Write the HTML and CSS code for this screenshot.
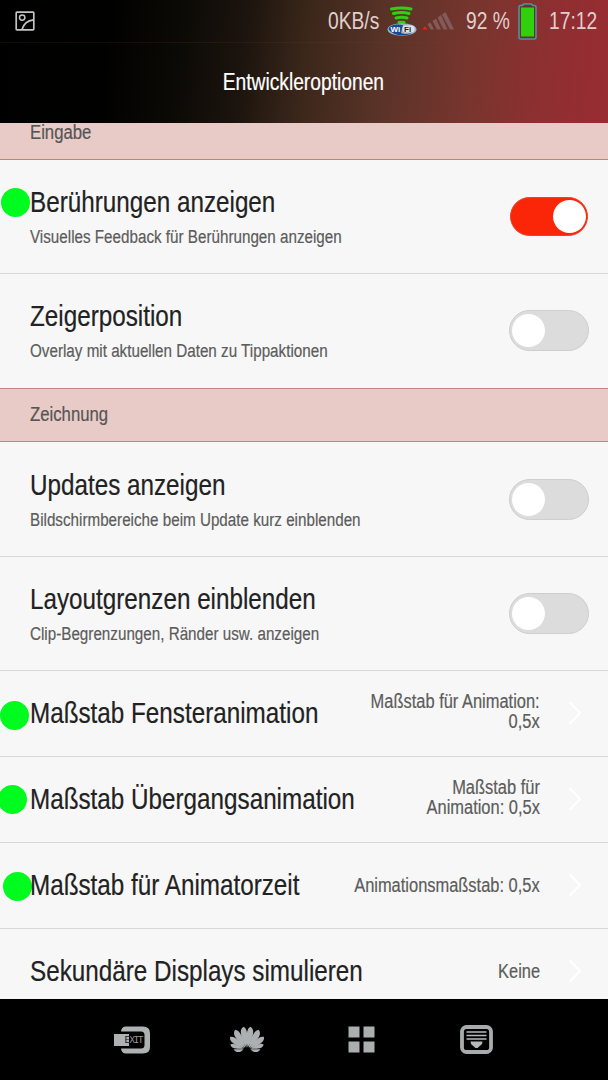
FILE: index.html
```html
<!DOCTYPE html>
<html lang="de">

<head>
    <meta charset="UTF-8">
    <meta name="viewport" content="width=device-width, initial-scale=1.0">
    <title>Entwickleroptionen</title>
    <link rel="stylesheet" href="styles.css">
</head>

<body>
    <div class="header">
        <div class="statusbar">
            <svg class="icon-picture" width="20" height="20" viewBox="0 0 20 20" fill="none" stroke="#c4c4c4" stroke-width="1.7">
                <rect x="1.2" y="1.2" width="17.6" height="17.6" rx="0.8"/>
                <circle cx="7.200" cy="6.600" r="2.700" stroke-width="1.500"/>
                <path d="M7 18.500C8.500 13 12 9.500 18.500 8.800"/>
            </svg>
            <span class="speed">0KB/s</span>
            <svg class="icon-wifi" width="30" height="31" viewBox="0 0 30 31">
                <g fill="none" stroke="#2fd00c" stroke-width="3" stroke-linecap="round">
                    <path d="M4.500 3Q15 0.800 24 3"/>
                    <path d="M6.500 7.500Q15 5.500 22 7.500"/>
                    <path d="M9 12Q15 10.500 20 12"/>
                    <path d="M12 16.200H17"/>
                </g>
                <ellipse cx="15" cy="23.500" rx="14.500" ry="6.200" fill="#9eb3bf"/>
                <path d="M1.500 23C3 18 12 18 16 19L14 27C18 29 25 28 27 25C23 31 6 31 1.500 23Z" fill="#174a93"/>
                <rect x="15.500" y="19.500" width="12" height="7" rx="3" fill="#dfe3e5"/>
                <text class="wifi-text" x="3.500" y="26" fill="#fff">Wi</text>
                <text class="wifi-text" x="17" y="26" fill="#222">Fi</text>
            </svg>
            <svg class="icon-signal" width="32" height="18" viewBox="0 0 32 18">
                <path d="M0 17.500L3 14L5.500 17.500Z" fill="#f31c10"/>
                <g fill="#84595a">
                    <path d="M5.500 12L8.500 10.500L12 17.500H8.500Z"/>
                    <path d="M10.500 9L14 6.500L19 17.500H15Z"/>
                    <path d="M15.500 5.500L19 3L25.500 17.500H21.500Z"/>
                    <path d="M20 2.500L23.500 0L32 17.500H28Z"/>
                </g>
            </svg>
            <span class="percent">92 %</span>
            <svg class="icon-battery" width="19" height="37" viewBox="0 0 19 37">
                <path d="M4 2.500L6 1H13L15 2.500H16.500Q18 2.500 18 4V34.500Q18 36 16.500 36H2.500Q1 36 1 34.500V4Q1 2.500 2.500 2.500Z" fill="#6b2f32" stroke="#4e929d" stroke-width="1.600"/>
                <rect x="3" y="4.500" width="13" height="29" fill="#2fd00c"/>
            </svg>
            <span class="clock">17:12</span>
        </div>
        <h1>Entwickleroptionen</h1>
    </div>

    <div class="content">
        <div class="section first"><h2>Eingabe</h2></div>
        <div class="row">
            <i class="dot dot-touch"></i>
            <div class="label">
                <p class="name">Berührungen anzeigen</p>
                <p class="desc">Visuelles Feedback für Berührungen anzeigen</p>
            </div>
            <div class="switch on"></div>
        </div>
        <div class="row last">
            <div class="label">
                <p class="name">Zeigerposition</p>
                <p class="desc">Overlay mit aktuellen Daten zu Tippaktionen</p>
            </div>
            <div class="switch"></div>
        </div>

        <div class="section"><h2>Zeichnung</h2></div>
        <div class="row">
            <div class="label">
                <p class="name">Updates anzeigen</p>
                <p class="desc">Bildschirmbereiche beim Update kurz einblenden</p>
            </div>
            <div class="switch"></div>
        </div>
        <div class="row">
            <div class="label">
                <p class="name">Layoutgrenzen einblenden</p>
                <p class="desc">Clip-Begrenzungen, Ränder usw. anzeigen</p>
            </div>
            <div class="switch"></div>
        </div>
        <div class="row small">
            <i class="dot dot-window"></i>
            <p class="name">Maßstab Fensteranimation</p>
            <p class="value two-lines">Maßstab für Animation:<br>0,5x</p>
            <svg class="arrow" width="14" height="26" viewBox="0 0 14 26"><path d="M1.500 2L12 13L1.500 24"/></svg>
        </div>
        <div class="row small">
            <i class="dot dot-transition"></i>
            <p class="name">Maßstab Übergangsanimation</p>
            <p class="value two-lines">Maßstab für<br>Animation: 0,5x</p>
            <svg class="arrow" width="14" height="26" viewBox="0 0 14 26"><path d="M1.500 2L12 13L1.500 24"/></svg>
        </div>
        <div class="row small">
            <i class="dot dot-animator"></i>
            <p class="name">Maßstab für Animatorzeit</p>
            <p class="value">Animationsmaßstab: 0,5x</p>
            <svg class="arrow" width="14" height="26" viewBox="0 0 14 26"><path d="M1.500 2L12 13L1.500 24"/></svg>
        </div>
        <div class="row small cut">
            <p class="name">Sekundäre Displays simulieren</p>
            <p class="value">Keine</p>
            <svg class="arrow" width="14" height="26" viewBox="0 0 14 26"><path d="M1.500 2L12 13L1.500 24"/></svg>
        </div>
    </div>

    <div class="navbar">
        <svg width="36" height="28" viewBox="0 0 36 28">
            <path d="M7 5.500Q7.500 0.500 12 0.500H29Q36 0.500 36 7V21Q36 27.500 29 27.500H12Q7.500 27.500 7 22.500H27Q30.500 22.500 30.500 19V9Q30.500 5.500 27 5.500Z" fill="#aeb2b3"/>
            <rect x="0" y="8" width="15" height="12" fill="#aeb2b3"/>
            <text class="exit-text" x="10.500" y="17" fill="#111">E</text>
            <text class="exit-text" x="15.500" y="17" fill="#999" textLength="14">XIT</text>
        </svg>
        <svg class="icon-flower" width="34" height="28" viewBox="0 0 34 28" fill="#adb0b1">
            <defs>
                <path id="petal" d="M0 0C-2.500 -6 -3.600 -12 -3 -16.500Q-2 -20.500 0.800 -21Q3 -19 3 -16C3.200 -11 2 -5 0 0Z"/>
            </defs>
            <g id="half">
                <use href="#petal" transform="translate(16.300 21.500) rotate(-9)"/>
                <use href="#petal" transform="translate(15.300 21.800) rotate(-31) scale(0.980)"/>
                <use href="#petal" transform="translate(14.500 22) rotate(-54) scale(0.860)"/>
                <use href="#petal" transform="translate(13.800 22.400) rotate(-76) scale(0.660)"/>
                <path d="M13.500 23.200H3.500C6 27 10.500 27 13.500 23.200Z"/>
            </g>
            <use href="#half" transform="translate(34 0) scale(-1 1)"/>
        </svg>
        <svg width="27" height="27" viewBox="0 0 27 27" fill="#abafaf">
            <rect x="0.500" y="0.500" width="11" height="11"/>
            <rect x="15.500" y="0.500" width="11" height="11"/>
            <rect x="0.500" y="15.500" width="11" height="11"/>
            <rect x="15.500" y="15.500" width="11" height="11"/>
        </svg>
        <svg class="icon-menu" width="33" height="29" viewBox="0 0 33 29">
            <rect x="2" y="2" width="29" height="25" rx="4.500" fill="none" stroke="#a9acad" stroke-width="3.800"/>
            <path d="M6.500 7H26.500M6.500 10.500H26.500M6.500 14H26.500" stroke="#b6b9ba" stroke-width="1.500"/>
            <path d="M10.500 16.500H22.500L22 19L17.500 23H15.500L11 19Z" fill="#b6b9ba"/>
        </svg>
    </div>
</body>

</html>
```
FILE: styles.css
```css
body {
    font-family: "Liberation Sans Narrow", "Liberation Sans", sans-serif;
    background-color: #000;
    color: #222;
    margin: 0;
    padding: 0;
    height: 1080px;
    display: flex;
    flex-direction: column;
    overflow: hidden;
}

h1, h2, p {
    margin: 0;
    font-weight: normal;
    white-space: nowrap;
}

/* condensed look for all labels */
h1, h2, .name, .desc, .value, .statusbar span {
    transform: scaleX(0.836);
    transform-origin: left;
    -webkit-text-stroke: 0.2px currentColor;
}

.header {
    height: 123px;
    flex: none;
    background: linear-gradient(96deg, #000 0%, #010100 18%, #0c0a06 30%, #1c140e 40%, #3b271a 50%, #5a3328 63%, #78352e 77%, #8e2f31 89%, #982c33 100%);
    color: #fff;
}

.statusbar {
    box-sizing: border-box;
    height: 43px;
    padding: 0 10px 0 15px;
    display: flex;
    align-items: center;
    border-bottom: 1px solid rgba(130, 60, 40, 0.16);
    color: #e0d0cd;
    font-size: 23px;
}

.statusbar span {
    white-space: nowrap;
    -webkit-text-stroke: 0;
}

.statusbar svg {
    flex: none;
}

.speed {
    width: 51px;
    margin-left: auto;
}

.icon-wifi {
    margin-left: 8px;
}

.icon-signal {
    margin-left: 5px;
}

.percent {
    width: 44px;
    margin-left: 12px;
}

.icon-battery {
    margin-left: 8px;
}

.clock {
    width: 49px;
    margin-left: 12px;
}

.wifi-text {
    font: bold 8px "Liberation Sans", sans-serif;
}

.header h1 {
    font-size: 23px;
    line-height: 79px;
    text-align: center;
    transform-origin: 300px;
}

.content {
    height: 876px;
    flex: none;
    background-color: #f7f7f7;
}

.section {
    box-sizing: border-box;
    height: 54px;
    margin-bottom: 1px;
    padding-left: 30px;
    background-color: #e8cbc7;
    border-top: 1px solid #c68680;
    border-bottom: 1px solid #d27c76;
    color: #555;
}

.section h2 {
    font-size: 20px;
    line-height: 51px;
}

.section.first {
    height: 37px;
    margin-bottom: 0;
    border-top: 0;
}

.section.first h2 {
    line-height: 18px;
}

.row {
    position: relative;
    box-sizing: border-box;
    height: 114px;
    padding: 0 19px 0 30px;
    display: flex;
    align-items: center;
    border-bottom: 1px solid #d8d8d8;
}

.row.last {
    border-bottom-color: #f7f7f7;
}

.row.small {
    height: 86px;
    padding: 0 25px 2px 30px;
}

.row.cut {
    height: 70px;
    padding-top: 15px;
    border-bottom: 0;
}

.label {
    flex: 1;
    min-width: 0;
    padding-top: 3px;
}

.name {
    font-size: 29px;
    line-height: 36px;
}

.row.small .name {
    flex: 1;
    min-width: 0;
}

.desc {
    margin-top: 3px;
    color: #5c5c5c;
    font-size: 18px;
    line-height: 29px;
    transform: scaleX(0.845);
}

.value {
    flex: none;
    color: #5c5c5c;
    font-size: 20px;
    line-height: 20px;
    text-align: right;
    transform: scaleX(0.822);
    transform-origin: right;
}

.value.two-lines {
    margin-bottom: 4px;
}

.arrow {
    flex: none;
    margin-left: 28px;
    margin-right: 1px;
    fill: none;
    stroke: #fff;
    stroke-width: 2;
}

.switch {
    box-sizing: border-box;
    flex: none;
    width: 80px;
    height: 41px;
    padding: 3px 2px;
    display: flex;
    border: 1px solid #cecece;
    border-radius: 21px;
    background-color: #dcdcdc;
}

.switch::before {
    content: "";
    width: 33px;
    height: 33px;
    border-radius: 50%;
    background-color: #fff;
}

.switch.on {
    width: 78px;
    height: 39px;
    margin-right: 1px;
    padding: 2px 1px;
    justify-content: flex-end;
    border-color: #e8442c;
    background-color: #fb2607;
}

/* markers on the recommended settings */
.dot {
    position: absolute;
    width: 29px;
    height: 29px;
    border-radius: 50%;
    background-color: #00fb1e;
}

.dot-touch {
    left: 1px;
    top: 28px;
}

.dot-window {
    left: 0;
    top: 30px;
}

.dot-transition {
    left: -2px;
    top: 28px;
}

.dot-animator {
    left: 3px;
    top: 29px;
}

.navbar {
    height: 81px;
    flex: none;
    padding-left: 114px;
    box-sizing: border-box;
    display: flex;
    align-items: center;
    gap: 84px;
    background-color: #000;
}

.icon-flower {
    margin-left: -4px;
}

.icon-menu {
    margin-left: 1px;
}

.exit-text {
    font: 9px "DejaVu Sans Mono", monospace;
}
```
